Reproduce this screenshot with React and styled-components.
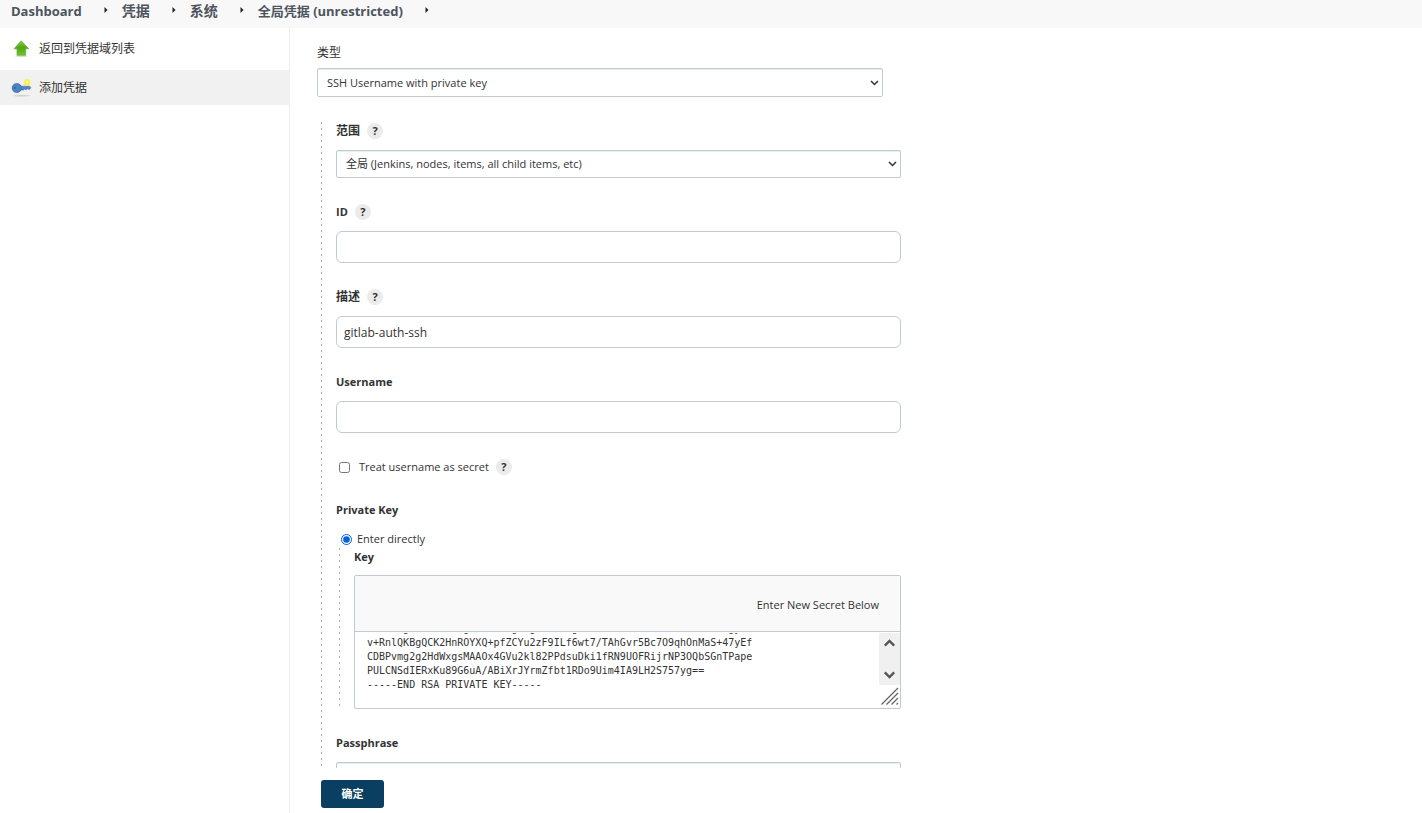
import { useEffect, useRef } from 'react'
import styled, { createGlobalStyle } from 'styled-components'

const GlobalStyle = createGlobalStyle`
  *, *::before, *::after {
    box-sizing: border-box;
  }

  body {
    margin: 0;
    background: #fff;
    color: #333;
    font: 11px/18px 'Open Sans', 'Noto Sans CJK SC', sans-serif;
  }

  button, input, select, textarea {
    font: inherit;
    color: inherit;
  }
`

const Page = styled.div`
  display: flex;
  flex-direction: column;
  height: 100vh;
`

const Breadcrumbs = styled.nav`
  display: flex;
  align-items: center;
  flex: none;
  height: 28px;
  padding: 0 11px 6px;
  background: #f8f8f8;
`

const Crumb = styled.a`
  color: #4d545d;
  font-size: ${({ $han }) => ($han ? '14px' : '13px')};
  font-weight: 700;
  text-decoration: none;
  white-space: nowrap;
`

const Separator = styled.svg`
  width: 4px;
  height: 6px;
  margin: 0 14px 2px 22px;
`

const Body = styled.div`
  display: flex;
  flex: 1;
  min-height: 0;
`

const SidePanel = styled.aside`
  display: flex;
  flex-direction: column;
  gap: 4px;
  flex: none;
  width: 290px;
  padding-top: 3px;
  border-right: 1px solid #efefef;
`

const Task = styled.a`
  display: flex;
  align-items: center;
  gap: 7px;
  height: 35px;
  padding-left: 11px;
  background: ${({ $active }) => ($active ? '#f1f1f1' : 'transparent')};
  color: #333;
  font-size: 12px;
  text-decoration: none;

  svg {
    width: 21px;
    height: 20px;
  }
`

const Main = styled.main`
  display: flex;
  flex-direction: column;
  flex: 1;
  min-width: 0;
`

const ScrollArea = styled.div`
  flex: 1;
  min-height: 0;
  overflow-y: auto;
  scrollbar-width: none;
`

const Form = styled.form`
  width: 50%;
  margin-left: 27px;
  padding: 16px 0 24px;
`

const Label = styled.label`
  font-size: ${({ $han }) => ($han ? '12px' : '11px')};
  font-weight: ${({ $plain }) => ($plain ? 400 : 700)};
`

const LabelRow = styled.div`
  display: flex;
  align-items: center;
  gap: 7px;
  height: 18px;
`

const Field = styled.div`
  display: flex;
  flex-direction: column;
  gap: ${({ $tight }) => ($tight ? '6px' : '10px')};
  margin-bottom: 25px;
`

const SelectBox = styled.div`
  position: relative;

  svg {
    position: absolute;
    top: 50%;
    right: 4px;
    width: 9px;
    height: 6px;
    margin-top: -3px;
    pointer-events: none;
  }
`

const Select = styled.select`
  appearance: none;
  display: block;
  width: 100%;
  height: ${({ $short }) => ($short ? '28px' : '29px')};
  padding: 0 24px 0 9px;
  border: 1px solid #bfcbd1;
  border-radius: 2px;
  background: #fff;
  box-shadow: inset 0 1px 1px #e9edef;
`

const TextInput = styled.input`
  width: 100%;
  height: 32px;
  padding: 0 7px;
  border: 1px solid #bfcbd1;
  border-radius: 6px;
  background: #fff;
  font-size: 12px;
`

const PassInput = styled(TextInput)`
  border-radius: 2px;
  box-shadow: inset 0 1px 1px #e9edef;
`

const HelpButton = styled.button`
  width: 16px;
  height: 16px;
  padding: 0;
  border: 0;
  border-radius: 50%;
  background: #ebebeb;
  font-weight: 700;
  line-height: 16px;
  text-align: center;
`

const dashedRail = `
  background: repeating-linear-gradient(#aaa 0 2px, transparent 2px 6px) left top / 1px 100% no-repeat;
`

const Nested = styled.div`
  ${dashedRail}
  width: calc(100% + 14px);
  margin-left: 4px;
  padding-left: 15px;
`

const CheckRow = styled.div`
  display: flex;
  align-items: center;
  height: 18px;
  margin: 0 0 25px 3px;

  input {
    width: 11px;
    height: 11px;
    margin: 0 9px 0 0;
  }

  button {
    margin-left: 7px;
  }
`

const RadioRow = styled.div`
  display: flex;
  align-items: center;
  gap: 5px;
  height: 18px;
  margin: 11px 0 0 5px;

  input {
    width: 11px;
    height: 11px;
    margin: 0;
    accent-color: #0060df;
  }
`

const KeyBlock = styled.div`
  ${dashedRail}
  display: flex;
  flex-direction: column;
  gap: 9px;
  margin: 0 0 25px 3px;
  padding-left: 15px;
`

const Secret = styled.div`
  border: 1px solid #bfcbd1;
  border-radius: 2px;
  overflow: hidden;
`

const SecretHeader = styled.div`
  display: flex;
  align-items: center;
  justify-content: flex-end;
  height: 56px;
  padding: 2px 21px 0;
  border-bottom: 1px solid #bfcbd1;
  background: #f9f9f9;
`

const SecretBody = styled.div`
  display: flex;
  height: 76px;
  padding-top: 1px;
`

const SecretText = styled.textarea`
  flex: 1;
  min-width: 0;
  padding: 8px 0 16px 12px;
  border: 0;
  outline: 0;
  resize: none;
  overflow-y: scroll;
  scrollbar-width: none;
  background: transparent;
  font: 10px/14px 'DejaVu Sans Mono', monospace;
  white-space: pre;
`

const ScrollColumn = styled.div`
  display: flex;
  flex-direction: column;
  width: 21px;
`

const ScrollTrack = styled.div`
  display: flex;
  flex-direction: column;
  justify-content: space-between;
  height: 52px;
  background: #f0f0f0;
`

const ScrollButton = styled.button`
  display: flex;
  align-items: center;
  justify-content: center;
  height: 20px;
  padding: 0;
  border: 0;
  background: transparent;
`

const Grip = styled.svg`
  width: 18px;
  height: 18px;
  margin: 2px 0 0 2px;
`

const Footer = styled.footer`
  flex: none;
  height: 45px;
  padding: 12px 31px 0;
`

const SubmitButton = styled.button`
  min-width: 63px;
  height: 28px;
  padding: 0 20px;
  border: 0;
  border-radius: 3px;
  background: #0b3f62;
  color: #fff;
  font-weight: 700;
`

const UpIcon = () => (
  <svg viewBox="0 0 21 20" aria-hidden="true">
    <defs>
      <linearGradient id="up" x1="0" y1="0" x2="0" y2="1">
        <stop offset="0" stopColor="#8ccb42" />
        <stop offset="0.5" stopColor="#4fa613" />
        <stop offset="1" stopColor="#70c72c" />
      </linearGradient>
    </defs>
    <ellipse cx="10.5" cy="17" rx="6.5" ry="1.2" fill="#ddd" />
    <path
      d="M10.3 1.8 17.6 9.8H14.6V16.2H6V9.8H3Z"
      fill="url(#up)"
      stroke="#5fae2a"
      strokeWidth="0.7"
      strokeLinejoin="round"
    />
  </svg>
)

const KeyIcon = () => (
  <svg viewBox="0 0 21 20" aria-hidden="true">
    <ellipse cx="10.5" cy="17.8" rx="8.5" ry="0.8" fill="#cfcfcf" />
    <path
      d="M8.6 6.8 10.4 8.2H18.6L19.8 9.4 18.8 11.2H17.4L16.4 10.7 15.2 11.8 13.8 11 12.6 12H10.2L8.6 13.2Z"
      fill="#5487c4"
      stroke="#3a69a5"
      strokeWidth="0.6"
    />
    <ellipse cx="5.8" cy="10" rx="4.7" ry="4.5" fill="#4c83c4" stroke="#3a69a5" strokeWidth="0.7" />
    <ellipse cx="3.6" cy="10" rx="0.9" ry="1.1" fill="#2c5a92" />
    <circle cx="16.2" cy="4.2" r="3.2" fill="#fbf04a" />
    <circle cx="16.2" cy="4.2" r="1.2" fill="#fffcc4" />
  </svg>
)

const Chevron = () => (
  <svg viewBox="0 0 9 6" aria-hidden="true">
    <path d="M1 1l3.5 3.5L8 1" fill="none" stroke="#333" strokeWidth="1.5" />
  </svg>
)

const Arrow = ({ up }) => (
  <svg width="11" height="8" viewBox="0 0 11 8" aria-hidden="true">
    <path
      d={up ? 'M0.8 6.6 5.5 1.9 10.2 6.6' : 'M0.8 1.4 5.5 6.1 10.2 1.4'}
      fill="none"
      stroke="#555"
      strokeWidth="2.4"
    />
  </svg>
)

const Help = ({ topic }) => (
  <HelpButton type="button" aria-label={`Help for ${topic}`}>
    ?
  </HelpButton>
)

const crumbs = [
  { name: 'Dashboard' },
  { name: '凭据', han: true },
  { name: '系统', han: true },
  { name: '全局凭据 (unrestricted)' },
]

const keyText = `mB4xTdgQ0sVn2LhKgRw7EzUMgcXgP1oSfHgaN5tWiZ3bDvKkC8rLuFx6OeJhgyTA
v+RnlQKBgQCK2HnROYXQ+pfZCYu2zF9ILf6wt7/TAhGvr5Bc7O9qhOnMaS+47yEf
CDBPvmg2g2HdWxgsMAAOx4GVu2kl82PPdsuDki1fRN9UOFRijrNP3OQbSGnTPape
PULCNSdIERxKu89G6uA/ABiXrJYrmZfbt1RDo9Uim4IA9LH2S757yg==
-----END RSA PRIVATE KEY-----`

const SecretArea = () => {
  const ref = useRef(null)

  useEffect(() => {
    ref.current.scrollTop = ref.current.scrollHeight
  }, [])

  const scrollBy = (amount) => {
    ref.current.scrollTop += amount
  }

  return (
    <Secret>
      <SecretHeader>Enter New Secret Below</SecretHeader>
      <SecretBody>
        <SecretText id="key" ref={ref} defaultValue={keyText} spellCheck={false} />
        <ScrollColumn>
          <ScrollTrack>
            <ScrollButton type="button" aria-label="Scroll up" onClick={() => scrollBy(-14)}>
              <Arrow up />
            </ScrollButton>
            <ScrollButton type="button" aria-label="Scroll down" onClick={() => scrollBy(14)}>
              <Arrow />
            </ScrollButton>
          </ScrollTrack>
          <Grip viewBox="0 0 18 18" aria-hidden="true">
            <path
              d="M0.5 17.5 17 1M5.5 17.5 17 6M10.5 17.5 17 11M15.5 17.5 17 16"
              fill="none"
              stroke="#666"
              strokeWidth="1.3"
            />
          </Grip>
        </ScrollColumn>
      </SecretBody>
    </Secret>
  )
}

const App = () => (
  <Page>
    <GlobalStyle />
    <Breadcrumbs>
      {crumbs.map(({ name, han }) => [
        <Crumb key={name} href="#" $han={han}>
          {name}
        </Crumb>,
        <Separator key={`${name}-sep`} viewBox="0 0 4 6" aria-hidden="true">
          <path d="M0.5 0 3.5 3 0.5 6Z" fill="#222" />
        </Separator>,
      ])}
    </Breadcrumbs>
    <Body>
      <SidePanel>
        <Task href="#">
          <UpIcon />
          返回到凭据域列表
        </Task>
        <Task href="#" $active>
          <KeyIcon />
          添加凭据
        </Task>
      </SidePanel>
      <Main>
        <ScrollArea>
          <Form id="credentials">
            <Field $tight>
              <Label htmlFor="kind" $plain $han>
                类型
              </Label>
              <SelectBox>
                <Select id="kind">
                  <option>SSH Username with private key</option>
                </Select>
                <Chevron />
              </SelectBox>
            </Field>
            <Nested>
              <Field>
                <LabelRow>
                  <Label htmlFor="scope" $han>
                    范围
                  </Label>
                  <Help topic="范围" />
                </LabelRow>
                <SelectBox>
                  <Select id="scope" $short>
                    <option>全局 (Jenkins, nodes, items, all child items, etc)</option>
                  </Select>
                  <Chevron />
                </SelectBox>
              </Field>
              <Field>
                <LabelRow>
                  <Label htmlFor="id">ID</Label>
                  <Help topic="ID" />
                </LabelRow>
                <TextInput id="id" />
              </Field>
              <Field>
                <LabelRow>
                  <Label htmlFor="description" $han>
                    描述
                  </Label>
                  <Help topic="描述" />
                </LabelRow>
                <TextInput id="description" defaultValue="gitlab-auth-ssh" />
              </Field>
              <Field>
                <Label htmlFor="username">Username</Label>
                <TextInput id="username" />
              </Field>
              <CheckRow>
                <input type="checkbox" id="secret" />
                <Label htmlFor="secret" $plain>
                  Treat username as secret
                </Label>
                <Help topic="Treat username as secret" />
              </CheckRow>
              <Label as="div">Private Key</Label>
              <RadioRow>
                <input type="radio" id="direct" name="source" defaultChecked />
                <Label htmlFor="direct" $plain>
                  Enter directly
                </Label>
              </RadioRow>
              <KeyBlock>
                <Label htmlFor="key">Key</Label>
                <SecretArea />
              </KeyBlock>
              <Field>
                <Label htmlFor="passphrase">Passphrase</Label>
                <PassInput id="passphrase" type="password" />
              </Field>
            </Nested>
          </Form>
        </ScrollArea>
        <Footer>
          <SubmitButton type="submit" form="credentials">
            确定
          </SubmitButton>
        </Footer>
      </Main>
    </Body>
  </Page>
)

export default App
